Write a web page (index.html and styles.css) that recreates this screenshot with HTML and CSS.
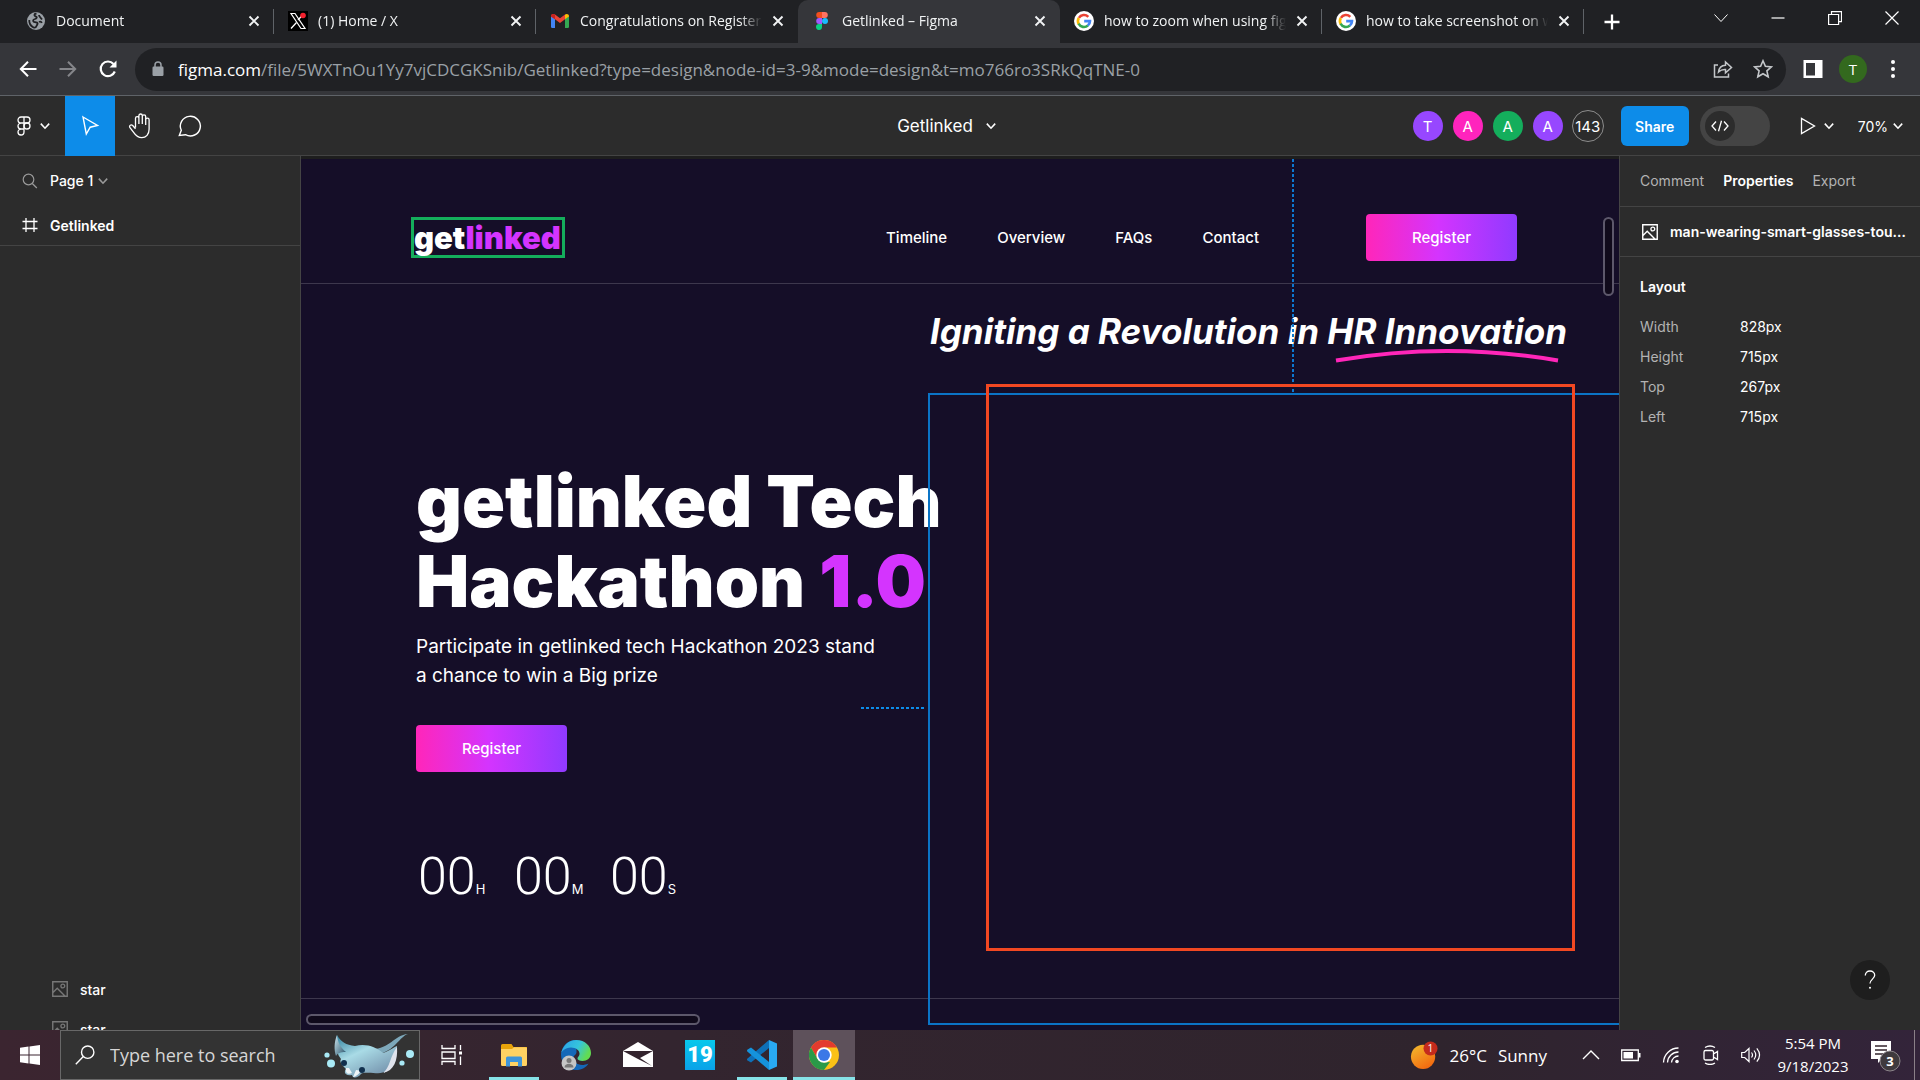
FILE: index.html
```html
<!DOCTYPE html>
<html lang="en">
<head>
<meta charset="utf-8">
<title>Getlinked – Figma</title>
<link rel="stylesheet" href="styles.css">
</head>
<body>
<svg class="defs" aria-hidden="true">
  <symbol id="close" viewBox="0 0 12 12"><path d="M1.5 1.5l9 9M10.5 1.5l-9 9" stroke="currentColor" stroke-width="1.9" fill="none"/></symbol>
  <symbol id="chev" viewBox="0 0 10 10"><path d="M1.500 3l3.500 3.800L8.500 3" stroke="currentColor" stroke-width="1.300" fill="none"/></symbol>
  <symbol id="google" viewBox="0 0 20 20"><circle cx="10" cy="10" r="10" fill="#fff"/><path d="M4.900 6.900A6 6 0 0 1 14.300 5.800" stroke="#ea4335" stroke-width="2.600" fill="none"/><path d="M4.700 13A6 6 0 0 1 4.800 7" stroke="#fbbc05" stroke-width="2.600" fill="none"/><path d="M13.900 14.500A6 6 0 0 1 4.600 12.700" stroke="#34a853" stroke-width="2.600" fill="none"/><path d="M10.200 10.100h5.800a6 6 0 0 1-2.200 4.500" stroke="#4285f4" stroke-width="2.600" fill="none"/></symbol>
  <symbol id="image" viewBox="0 0 16 16"><path d="M.75.75h14.500v14.500H.75zM1 11.500l4.200-4.200 8 8" stroke="currentColor" stroke-width="1.400" fill="none"/><circle cx="10.800" cy="5" r="1.900" stroke="currentColor" stroke-width="1.300" fill="none"/></symbol>
</svg>

<header class="browser">
  <div class="tabstrip">
    <div class="tab">
      <svg class="fav" viewBox="0 0 20 20"><circle cx="10" cy="10" r="9" fill="#9aa0a6"/><path d="M10.500 2.500c-3 .5-2.500 2.500-.5 3 1.500.5.500 2-1 2.500-2 .5-2.500 2-1 3l3 .5c1.500 1 0 2.500-.5 3.500-.5 1.500-1.500 2-3 1.500C5 15 3 12 3.300 9M13 4c0 2 2 2.500 3 4.500M13 11c1.500-1 2.500 0 2.700 1" stroke="#202124" stroke-width="1.800" fill="none"/></svg>
      <span class="tab-title">Document</span>
      <button class="tab-close" aria-label="Close tab"><svg><use href="#close"/></svg></button>
    </div>
    <div class="tab">
      <svg class="fav" viewBox="0 0 20 20"><path d="M0 0h20v20H0z"/><path d="M3 2.500h4L17 17.500h-4z" stroke="#fff" stroke-width="1.200" fill="none"/><path d="M16 2.500l-6 6.500M8.500 11.500L3 17.500" stroke="#fff" stroke-width="1.300"/><circle cx="15" cy="4.500" r="2.800" fill="#f4212e"/></svg>
      <span class="tab-title">(1) Home / X</span>
      <button class="tab-close" aria-label="Close tab"><svg><use href="#close"/></svg></button>
    </div>
    <div class="tab before-active">
      <svg class="fav" viewBox="0 0 20 20"><path d="M1 5l4 3v9H2.200A1.200 1.200 0 0 1 1 15.800z" fill="#4285f4"/><path d="M19 5l-4 3v9h2.800a1.200 1.200 0 0 0 1.200-1.200z" fill="#34a853"/><path d="M1 5.200C1 3 3.300 2.300 5 3.500L10 7.300l5-3.800V8.200L10 12 5 8.200 1 5.400z" fill="#ea4335"/><path d="M1 5.200C1 3 3.400 2.300 5 3.500v4.700L1 5.600z" fill="#c5221f"/><path d="M15 3.500c1.700-1.200 4-.5 4 1.700v.4l-4 2.600z" fill="#fbbc04"/></svg>
      <span class="tab-title">Congratulations on Registering</span>
      <button class="tab-close" aria-label="Close tab"><svg><use href="#close"/></svg></button>
    </div>
    <div class="tab active">
      <svg class="fav" viewBox="0 0 20 20"><path d="M10 1H7.200a3 3 0 0 0 0 6H10z" fill="#f24e1e"/><path d="M10 1h2.800a3 3 0 0 1 0 6H10z" fill="#ff7262"/><path d="M10 7H7.200a3 3 0 0 0 0 6H10z" fill="#a259ff"/><circle cx="13" cy="10" r="3" fill="#1abcfe"/><path d="M10 13H7.200a3 3 0 1 0 2.800 3z" fill="#0acf83"/></svg>
      <span class="tab-title">Getlinked – Figma</span>
      <button class="tab-close" aria-label="Close tab"><svg><use href="#close"/></svg></button>
    </div>
    <div class="tab">
      <svg class="fav"><use href="#google"/></svg>
      <span class="tab-title">how to zoom when using figma</span>
      <button class="tab-close" aria-label="Close tab"><svg><use href="#close"/></svg></button>
    </div>
    <div class="tab">
      <svg class="fav"><use href="#google"/></svg>
      <span class="tab-title">how to take screenshot on windows</span>
      <button class="tab-close" aria-label="Close tab"><svg><use href="#close"/></svg></button>
    </div>
    <button class="new-tab" aria-label="New tab"><svg viewBox="0 0 16 16"><path d="M8 .5v15M.5 8h15" stroke="currentColor" stroke-width="2.300"/></svg></button>
    <div class="window-controls">
      <button aria-label="Search tabs"><svg viewBox="0 0 14 14"><path d="M.5 3.500L7 10.500l6.500-7" stroke="currentColor" fill="none"/></svg></button>
      <button aria-label="Minimize"><svg viewBox="0 0 14 14"><path d="M.5 7h13" stroke="currentColor" stroke-width="1.200"/></svg></button>
      <button aria-label="Restore"><svg viewBox="0 0 14 14"><path d="M.6 3.500h10v10h-10zM3.500 3.500V.6h10v10h-2.900" stroke="currentColor" stroke-width="1.200" fill="none"/></svg></button>
      <button aria-label="Close window"><svg viewBox="0 0 14 14"><path d="M.5.5l13 13M13.500.5l-13 13" stroke="currentColor" stroke-width="1.200"/></svg></button>
    </div>
  </div>
  <div class="addressbar">
    <div class="nav-buttons">
      <button aria-label="Back"><svg viewBox="0 0 20 20"><path d="M18.500 10H3M10 2.800L2.800 10l7.200 7.200" stroke="currentColor" stroke-width="2" fill="none"/></svg></button>
      <button aria-label="Forward" class="dim"><svg viewBox="0 0 20 20"><path d="M1.500 10H17M10 2.800l7.200 7.200-7.200 7.200" stroke="currentColor" stroke-width="2" fill="none"/></svg></button>
      <button aria-label="Reload"><svg viewBox="0 0 20 20"><path d="M16.800 12.500A7.300 7.300 0 1 1 15.500 5" stroke="currentColor" stroke-width="2.200" fill="none"/><path d="M18.500 1.500v7h-7z" fill="currentColor"/></svg></button>
    </div>
    <div class="omnibox">
      <svg class="lock" viewBox="0 0 12 16"><rect x=".5" y="5.500" width="11" height="9.500" rx="1.200" fill="#9aa0a6"/><path d="M3 6V4a3 3 0 0 1 6 0v2" stroke="#9aa0a6" stroke-width="1.500" fill="none"/></svg>
      <a class="url" href="#"><span class="domain">figma.com</span>/file/5WXTnOu1Yy7vjCDCGKSnib/Getlinked?type=design&amp;node-id=3-9&amp;mode=design&amp;t=mo766ro3SRkQqTNE-0</a>
      <button aria-label="Share page"><svg viewBox="0 0 20 20"><path d="M5 6H1.500v12h14v-3.500M5.500 13c.5-4.500 3.500-6.500 7-6.700V3l6 5.500-6 5.300v-3.300c-3-.2-5 .5-7 2.500z" stroke="currentColor" stroke-width="1.500" fill="none"/></svg></button>
      <button aria-label="Bookmark"><svg viewBox="0 0 20 20"><path d="M10 1.800l2.400 5.500 6 .6-4.500 4 1.300 5.900L10 14.700l-5.200 3.100 1.300-5.900-4.500-4 6-.6z" stroke="currentColor" stroke-width="1.600" fill="none"/></svg></button>
    </div>
    <div class="profile-tools">
      <button aria-label="Side panel"><svg viewBox="0 0 20 20"><path d="M.5 1h19v18H.5zm2.500 3v12.500h9V4z" fill="currentColor" fill-rule="evenodd"/></svg></button>
      <button class="profile" aria-label="Profile">T</button>
      <button aria-label="Menu"><svg viewBox="0 0 20 20"><circle cx="10" cy="3" r="2"/><circle cx="10" cy="10" r="2"/><circle cx="10" cy="17" r="2"/></svg></button>
    </div>
  </div>
</header>

<div class="toolbar">
  <div class="tools">
    <button class="tool menu" aria-label="Main menu">
      <svg class="i-menu" viewBox="0 0 14 20"><path d="M7 1H4a3 3 0 0 0 0 6h3zM7 1h3a3 3 0 0 1 0 6H7zM7 7H4a3 3 0 0 0 0 6h3zM7 13H4a3 3 0 1 0 3 3z" stroke="currentColor" stroke-width="1.300" fill="none"/><circle cx="10" cy="10" r="3" stroke="currentColor" stroke-width="1.300" fill="none"/></svg>
      <svg class="chev"><use href="#chev"/></svg>
    </button>
    <button class="tool selected" aria-label="Move"><svg viewBox="0 0 24 24"><path d="M5 3l14.500 8.500-7.300 1.700L8.300 20z" stroke="currentColor" stroke-width="1.400" fill="none"/></svg></button>
    <button class="tool" aria-label="Hand tool"><svg class="i-hand" viewBox="0 0 24 26"><path d="M7.500 14.500V5.300a1.700 1.700 0 0 1 3.400 0V11M10.900 11V2.700a1.700 1.700 0 0 1 3.400 0V11M14.300 11V3.600a1.700 1.700 0 0 1 3.400 0V12M17.700 12V6.800a1.700 1.700 0 0 1 3.400 0v9.500c0 5-3 8.400-7.300 8.400-4 0-6-2-8-5L1.800 14.500c-1-2 1.300-3.500 2.900-2l2.800 3.200" stroke="currentColor" stroke-width="1.300" fill="none"/></svg></button>
    <button class="tool" aria-label="Comment tool"><svg viewBox="0 0 24 24"><path d="M1.300 21.500l2-5.200A10 9.800 0 1 1 7.500 20.700z" stroke="currentColor" stroke-width="1.400" fill="none"/></svg></button>
  </div>
  <button class="file-name">Getlinked <svg class="chev"><use href="#chev"/></svg></button>
  <div class="actions">
    <div class="avatars">
      <span class="avatar violet">T</span><span class="avatar pink">A</span><span class="avatar green">A</span><span class="avatar violet">A</span><span class="avatar count">143</span>
    </div>
    <button class="share">Share</button>
    <button class="dev-toggle" aria-label="Dev mode"><span class="knob"><svg viewBox="0 0 18 12"><path d="M5 1.500L1 6l4 4.500M13 1.500L17 6l-4 4.500M10.500.8l-3 10.400" stroke="currentColor" stroke-width="1.300" fill="none"/></svg></span></button>
    <button class="present" aria-label="Present"><svg class="play" viewBox="0 0 16 18"><path d="M1.500 1.500v15L14.500 9z" stroke="currentColor" stroke-width="1.300" fill="none"/></svg><svg class="chev"><use href="#chev"/></svg></button>
    <button class="zoom-level">70% <svg class="chev"><use href="#chev"/></svg></button>
  </div>
</div>

<div class="workspace">
  <aside class="layers">
    <button class="page-row"><svg viewBox="0 0 16 16"><circle cx="6.500" cy="6.500" r="5.300" stroke="currentColor" stroke-width="1.200" fill="none"/><path d="M10.300 10.500l4.500 4.500" stroke="currentColor" stroke-width="1.200"/></svg><span>Page 1</span><svg class="chev"><use href="#chev"/></svg></button>
    <div class="frame-row"><svg viewBox="0 0 16 16"><path d="M4 1v14M12 1v14M.5 4.500h15M.5 11.500h15" stroke="currentColor" stroke-width="1.300"/></svg><span>Getlinked</span></div>
    <ul class="layer-list">
      <li><svg><use href="#image"/></svg>star</li>
      <li><svg><use href="#image"/></svg>star</li>
    </ul>
  </aside>

  <main class="canvas">
    <div class="site">
      <div class="site-header">
        <a class="logo" href="#">get<span class="accent">linked</span></a>
        <nav class="site-nav"><a href="#">Timeline</a><a href="#">Overview</a><a href="#">FAQs</a><a href="#">Contact</a></nav>
        <button class="register">Register</button>
      </div>
      <section class="hero">
        <p class="slogan">Igniting a Revolution in <span class="marked">HR Innovation<svg class="swoosh" viewBox="0 0 226 16" preserveAspectRatio="none"><path d="M1 12.500Q113-6.500 225 12.500" stroke="#ff26b9" stroke-width="4" fill="none"/></svg></span></p>
        <h1>getlinked Tech<br>Hackathon <span class="accent">1.0</span></h1>
        <p class="lead">Participate in getlinked tech Hackathon 2023 stand<br>a chance to win a Big prize</p>
        <button class="register">Register</button>
        <div class="countdown">
          <div class="unit">00<small>H</small></div>
          <div class="unit">00<small>M</small></div>
          <div class="unit">00<small>S</small></div>
        </div>
      </section>
    </div>
    <div class="guide-v"></div>
    <div class="guide-h"></div>
    <div class="hover-outline"></div>
    <div class="viewer-outline"></div>
    <div class="scroll-v"></div>
    <div class="scroll-h"></div>
  </main>

  <aside class="inspector">
    <div class="inspector-tabs"><button>Comment</button><button class="current">Properties</button><button>Export</button></div>
    <div class="selection"><svg><use href="#image"/></svg><span>man-wearing-smart-glasses-touching-screen</span></div>
    <h2>Layout</h2>
    <dl>
      <dt>Width</dt><dd>828px</dd>
      <dt>Height</dt><dd>715px</dd>
      <dt>Top</dt><dd>267px</dd>
      <dt>Left</dt><dd>715px</dd>
    </dl>
    <button class="help" aria-label="Help"><svg viewBox="0 0 12 20"><path d="M1.300 5.500C1.300 2.600 3.300 1 6 1s4.700 1.700 4.700 4.200c0 3.600-4.700 4.300-4.700 8.300" stroke="currentColor" stroke-width="1.300" fill="none"/><circle cx="6" cy="17.800" r="1" fill="currentColor"/></svg></button>
  </aside>
</div>

<footer class="taskbar">
  <button class="start" aria-label="Start"><svg viewBox="0 0 20 20"><path d="M0 2.800L8.500 1.600v8H0zM9.500 1.500L20 0v9.600H9.500zM0 10.500h8.500v8L0 17.300zM9.500 10.500H20V20l-10.500-1.500z" fill="#fff"/></svg></button>
  <div class="search">
    <svg class="lens" viewBox="0 0 20 20"><circle cx="12.700" cy="7.200" r="6.200" stroke="#fff" stroke-width="1.400" fill="none"/><path d="M8.300 11.600L.8 19.200" stroke="#fff" stroke-width="1.400"/></svg>
    <input type="text" placeholder="Type here to search" aria-label="Type here to search">
    <svg class="ray" viewBox="0 0 90 46">
      <defs><linearGradient id="rayg" x1="0" y1="0" x2=".7" y2="1"><stop offset="0" stop-color="#2d7f9c"/><stop offset=".45" stop-color="#a9dbe6"/><stop offset="1" stop-color="#7593ad"/></linearGradient><linearGradient id="wing" x1="0" y1="0" x2="1" y2="1"><stop offset="0" stop-color="#cfe7ee"/><stop offset="1" stop-color="#245069"/></linearGradient></defs>
      <path d="M48 17C66 17 70 3 84 2c-8 2-14 18-30 20z" fill="#7da8ba"/>
      <path d="M13 3c4 7 9 10 18 11 11-3 21 1 28 7 6-2 11-6 14-7 0 9-2 21-12 26-10 3-20-1-24 2-3 4-8 5-9 1-6 1-9-2-6-6-4-4-7-7-5-10-5-6-6-15-4-24z" fill="url(#rayg)"/>
      <path d="M13 3c1 8 3 12 9 17-6 0-8 1-10 4-2-6-2-14 1-21z" fill="url(#wing)"/>
      <path d="M73 15c1 13-3 24-14 26 7-5 7-17 14-26z" fill="#dfe3ec"/>
      <path d="M22 36c-1 5 2 7 6 5l-3-5zM29 45c4 0 6-5 10-6l-7-1z" fill="#eef4f7"/>
      <circle cx="20" cy="31" r="3" fill="#12304d"/><circle cx="38" cy="38" r="3" fill="#12304d"/>
      <g fill="#a9eaf6"><circle cx="3" cy="23" r="2.600"/><circle cx="7" cy="31.500" r="4"/><circle cx="86" cy="22" r="4"/><circle cx="78" cy="31" r="2.600"/></g>
    </svg>
  </div>
  <div class="apps">
    <button aria-label="Task view"><svg class="i-small" viewBox="0 0 22 22"><path d="M1 1v3.500h13V1M1 21v-3.500h13V21M1 8h13v6.500H1zM19.500 1v5M19.500 12.500v8.500" stroke="#fff" stroke-width="1.300" fill="none"/><path d="M18 7.500h3v3h-3z" fill="#fff"/></svg></button>
    <button class="running" aria-label="File Explorer"><svg viewBox="0 0 30 30"><path d="M2 5.500A1.500 1.500 0 0 1 3.500 4h9l2 3H28v6H2z" fill="#e8a30a"/><path d="M2 9h11l2-1.700h11.500A1.500 1.500 0 0 1 28 9v15.500a1.500 1.500 0 0 1-1.500 1.500h-23A1.500 1.500 0 0 1 2 24.500z" fill="#ffd262"/><path d="M7 26.500V18a1.500 1.500 0 0 1 1.500-1.500h13A1.500 1.500 0 0 1 23 18v8.500h-4V22h-8v4.500z" fill="#3e95d9"/></svg></button>
    <button aria-label="Edge"><svg class="i-large" viewBox="0 0 32 32"><defs><linearGradient id="edg" x1="0" y1="0" x2="1" y2=".4"><stop offset="0" stop-color="#2b9fe8"/><stop offset=".6" stop-color="#35c5dc"/><stop offset="1" stop-color="#62dc52"/></linearGradient></defs><path d="M16 1C8 1 1.500 7 1 15.500 1 25 8 31 16 31c6 0 10-2.500 12.500-6.500-9 4-15-1-15-5.500 0-3 3-3 3-6z" fill="#1468b8"/><path d="M1 15.500C2 7 8.500 1 16.500 1 25 1 31 7 31 14c0 5-4 8-8.500 8-3 0-5-1-5-2.500s2-2 2-5-3.500-6-8.500-6c-6 0-10 4-10 7z" fill="url(#edg)"/><circle cx="9" cy="24" r="7.500" fill="#c5c5c5"/><circle cx="9" cy="21.500" r="2.500" fill="#777"/><path d="M4.500 28.500c0-5 9-5 9 0" fill="#777"/></svg></button>
    <button aria-label="Mail"><svg viewBox="0 0 30 30"><path d="M0 11L15 2l15 9v16H0z" fill="#fff"/><path d="M0 11h30L17 18l12 8-14-7z" fill="#33232d"/></svg></button>
    <button aria-label="Calendar app"><span class="nineteen">19</span></button>
    <button class="running" aria-label="Visual Studio Code"><svg viewBox="0 0 30 30"><path d="M22 0l8 3.500v23L22 30z" fill="#29a9f2"/><path d="M22 0v8L4 22.500l-3.500-2c-.7-.6-.7-1.500 0-2z" fill="#0e70b8"/><path d="M22 30v-8L4 7.500.6 9.600c-.8.700-.8 1.500 0 2.200z" fill="#1593dc"/></svg></button>
    <button class="running focused" aria-label="Chrome"><svg viewBox="0 0 30 30"><circle cx="15" cy="15" r="15" fill="#fbc116"/><path d="M2 7.500A15 15 0 0 1 28 7.500H15L8.500 18.800z" fill="#e33b2e"/><path d="M2 7.500l6.500 11.300L15 22.500l6-.5-6 8A15 15 0 0 1 2 7.500z" fill="#2a9a48"/><circle cx="15" cy="15" r="7.700" fill="#fff"/><circle cx="15" cy="15" r="6" fill="#3b78e7"/></svg></button>
  </div>
  <div class="tray">
    <button class="weather"><svg viewBox="0 0 30 30"><defs><linearGradient id="sun" x1="0" y1="0" x2=".6" y2="1"><stop offset="0" stop-color="#f3bd2f"/><stop offset="1" stop-color="#f26a10"/></linearGradient></defs><circle cx="14" cy="17" r="13" fill="url(#sun)"/><circle cx="22" cy="8" r="7.500" fill="#c42b1c"/><text x="22" y="12" text-anchor="middle" font-size="11" fill="#fff">1</text></svg><span>26°C</span><span>Sunny</span></button>
    <div class="status">
      <button aria-label="Hidden icons"><svg viewBox="0 0 20 20"><path d="M2 14l8-8 8 8" stroke="#fff" stroke-width="1.400" fill="none"/></svg></button>
      <button aria-label="Battery"><svg viewBox="0 0 20 20"><path d="M.7 5h16.600v10.500H.7z" stroke="#fff" stroke-width="1.300" fill="none"/><path d="M2.500 7h9.500v6.500H2.500zM17.500 8h2v4.500h-2z" fill="#fff"/></svg></button>
      <button aria-label="Network"><svg viewBox="0 0 20 20"><path d="M2.500 17.500A15 15 0 0 1 17.500 3M6.500 17.500A11 11 0 0 1 17.500 7M10.500 17.500A7 7 0 0 1 17.500 11" stroke="#fff" stroke-width="1.300" fill="none"/><circle cx="16" cy="16.500" r="1.800" fill="#fff"/></svg></button>
      <button aria-label="Meet now"><svg viewBox="0 0 20 20"><path d="M3 7a1.500 1.500 0 0 1 1.500-1.500H11A1.500 1.500 0 0 1 12.500 7v6.500A1.500 1.500 0 0 1 11 15H4.500A1.500 1.500 0 0 1 3 13.500zM12.500 9l4-2.500v8l-4-2.500M4 2.500q5-3 10 0M4 18q5 3 10 0" stroke="#fff" stroke-width="1.300" fill="none"/></svg></button>
      <button aria-label="Volume"><svg viewBox="0 0 20 20"><path d="M.7 7.500h3L8 3.500v13L3.700 12.500h-3zM10.500 7.500q2 2.500 0 5M13 5.500q3.500 4.500 0 9M15.800 3.300q5.500 6.700 0 13.400" stroke="#fff" stroke-width="1.200" fill="none"/></svg></button>
    </div>
    <button class="clock"><span>5:54 PM</span><span>9/18/2023</span></button>
    <button class="notices" aria-label="Notifications"><svg viewBox="0 0 32 34"><path d="M2 3h20v18h-9l-4 4v-4H2z" fill="#fff"/><path d="M6 8h12M6 12h12M6 16h8" stroke="#33242d" stroke-width="1.400"/><circle cx="21" cy="23" r="10" fill="#3f3a3e" stroke="#8c858a"/><text x="21" y="28" text-anchor="middle" font-size="13" font-weight="700" fill="#fff">3</text></svg></button>
  </div>
</footer>
</body>
</html>
```
FILE: styles.css
```css
* { box-sizing: border-box; }

body {
  margin: 0;
  height: 100vh;
  display: flex;
  flex-direction: column;
  overflow: hidden;
  background: #2c2c2c;
  color: #fff;
  font-family: Inter, "Liberation Sans", sans-serif;
  font-size: 14px;
}

button {
  display: flex;
  align-items: center;
  justify-content: center;
  margin: 0;
  padding: 0;
  border: 0;
  background: none;
  color: inherit;
  font: inherit;
}

a { color: inherit; text-decoration: none; }
svg { display: block; flex: none; }
.defs { position: absolute; width: 0; height: 0; }
.chev { width: 12px; height: 12px; }

/* Browser */
.browser { flex: none; background: #35363a; border-bottom: 1px solid #5f6368; font-family: "Open Sans", sans-serif; }
.tabstrip { display: flex; height: 43px; padding-left: 12px; background: #202124; }
.tab {
  position: relative;
  display: flex;
  align-items: center;
  flex: 0 1 262px;
  min-width: 0;
  padding: 0 14px 2px;
  color: #f1f3f4;
}
.tab::after {
  content: "";
  position: absolute;
  right: 0;
  top: 9px;
  width: 1px;
  height: 25px;
  background: #5f6368;
}
.tab.active::after, .tab.before-active::after { display: none; }
.tab.active { background: #35363a; border-radius: 10px 10px 0 0; }
.fav { width: 20px; height: 20px; }
.tab-title {
  flex: 1;
  margin: 0 10px;
  overflow: hidden;
  white-space: nowrap;
  font-size: 14px;
  mask-image: linear-gradient(to right, #000 88%, transparent);
}
.tab-close svg { width: 12px; height: 12px; }
.new-tab { width: 56px; }
.new-tab svg { width: 16px; height: 16px; }
.window-controls { display: flex; margin-left: auto; padding-bottom: 7px; }
.window-controls button { width: 57px; }
.window-controls svg { width: 14px; height: 14px; }

.addressbar { display: flex; align-items: center; height: 52px; }
.nav-buttons { display: flex; gap: 20px; padding: 0 17px 0 18px; }
.nav-buttons svg, .omnibox button svg, .profile-tools svg { width: 20px; height: 20px; fill: currentColor; }
.dim { color: #85868a; }
.omnibox {
  display: flex;
  align-items: center;
  flex: 1;
  min-width: 0;
  height: 43px;
  padding: 0 13px 0 17px;
  border-radius: 22px;
  background: #202124;
  color: #c4c7ca;
}
.lock { width: 12px; height: 16px; }
.url { flex: 1; margin-left: 14px; overflow: hidden; white-space: nowrap; font-size: 17px; color: #9aa0a6; }
.domain { color: #fff; }
.omnibox button { margin-left: 20px; }
.profile-tools { display: flex; align-items: center; gap: 16px; padding: 0 17px; }
.profile { width: 28px; height: 28px; border-radius: 50%; background: #33691e; font-size: 15px; }

/* Editor toolbar */
.toolbar {
  display: grid;
  grid-template-columns: 1fr auto 1fr;
  flex: none;
  height: 60px;
  border-bottom: 1px solid #444;
}
.tools { display: flex; }
.tool { width: 50px; height: 60px; }
.tool svg { width: 24px; height: 24px; }
.tool.menu { width: 65px; gap: 8px; padding-left: 2px; }
.tool.menu .i-menu { width: 14px; height: 20px; }
.tool.menu .chev { width: 12px; height: 12px; }
.tool .i-hand { height: 26px; }
.selected { background: #0d8ce9; }
.file-name { gap: 12px; padding-right: 26px; font-size: 17px; }
.actions { display: flex; align-items: center; justify-content: flex-end; padding-right: 16px; }
.avatars { display: flex; align-items: center; gap: 10px; margin-right: 17px; }
.avatar {
  display: flex;
  align-items: center;
  justify-content: center;
  width: 30px;
  height: 30px;
  border-radius: 50%;
  font-size: 15px;
}
.violet { background: #9747ff; }
.pink { background: #ff24bd; }
.green { background: #14ae5c; }
.count { width: 32px; height: 32px; margin-left: -1px; border: 1px solid #8c8c8c; }
.share { width: 68px; height: 40px; border-radius: 6px; background: #0d8ce9; font-weight: 600; }
.dev-toggle { justify-content: flex-start; width: 70px; height: 40px; margin-left: 11px; padding-left: 5px; border-radius: 20px; background: #444; }
.knob { display: flex; align-items: center; justify-content: center; width: 30px; height: 30px; border-radius: 50%; background: #2c2c2c; }
.knob svg { width: 18px; height: 12px; }
.present { gap: 7px; margin-left: 30px; }
.play { width: 16px; height: 18px; }
.zoom-level { gap: 4px; margin-left: 23px; }

/* Workspace */
.workspace { display: flex; flex: 1; min-height: 0; }
.layers { display: flex; flex-direction: column; flex: none; width: 301px; overflow: hidden; border-right: 1px solid #444; }
.page-row, .frame-row { display: flex; align-items: center; justify-content: flex-start; flex: none; padding: 0 0 1px 22px; }
.page-row { height: 50px; font-weight: 500; }
.page-row svg, .frame-row svg { width: 16px; height: 16px; margin-right: 12px; }
.page-row svg { color: #9a9a9a; }
.page-row .chev { width: 12px; height: 12px; margin-left: 4px; }
.frame-row { height: 40px; border-bottom: 1px solid #444; font-weight: 600; }
.layer-list { flex: none; margin: auto 0 -20px; padding: 0; list-style: none; }
.layer-list li { display: flex; align-items: center; gap: 12px; height: 40px; padding: 0 0 2px 52px; font-weight: 500; }
.layer-list svg { width: 16px; height: 16px; color: #777; }

/* Canvas */
.canvas { position: relative; flex: 1; min-width: 0; overflow: hidden; padding-top: 3px; background: #1e1e1e; }
.site { min-height: 100%; background: #150e28; }
.site-header { display: flex; align-items: flex-start; height: 125px; padding: 34px 102px 0 110px; border-bottom: 1px solid #3d374d; }
.site-header > * { flex: none; }
.logo {
  margin-top: 24px;
  width: 154px;
  height: 41px;
  border: 3px solid #14ae5c;
  line-height: 35px;
  font-size: 31px;
  font-weight: 900;
}
.accent { color: #d434fe; }
.site-nav { display: flex; gap: 50px; margin: 36px 107px 0 auto; font-size: 15px; line-height: 18px; font-weight: 500; }
.register {
  width: 151px;
  height: 47px;
  border-radius: 4px;
  background: linear-gradient(90deg, #ff26b9, #d434fe 48%, #903aff);
  font-size: 15px;
  font-weight: 500;
}
.site-header .register { margin-top: 21px; }
.hero { height: 715px; padding: 27px 52px 0 115px; border-bottom: 1px solid #3d374d; }
.slogan { margin: 0; text-align: right; white-space: nowrap; font-size: 35px; line-height: 40px; font-weight: 700; font-style: italic; }
.marked { position: relative; }
.swoosh { position: absolute; left: 8px; bottom: -12px; width: 224px; height: 16px; }
h1 { margin: 110px 0 0; font-size: 71px; line-height: 80px; font-weight: 900; white-space: nowrap; }
.lead { margin: 11px 0 35px; font-size: 19px; line-height: 29px; white-space: nowrap; }
.countdown { display: flex; gap: 24px; margin-top: 74px; padding-left: 2px; font-family: Roboto, sans-serif; font-size: 52px; line-height: 62px; font-weight: 300; }
.unit { width: 72px; white-space: nowrap; }
.unit small { font-family: Inter, sans-serif; font-size: 13px; font-weight: 400; }

/* Overlays drawn above the artboard */
.guide-v { position: absolute; left: 991px; top: 3px; width: 2px; height: 234px; background: repeating-linear-gradient(#0d78d0 0 3px, transparent 3px 5px); }
.guide-h { position: absolute; left: 560px; top: 551px; width: 65px; height: 2px; background: repeating-linear-gradient(90deg, #0d8ce9 0 3px, transparent 3px 5px); }
.hover-outline { position: absolute; left: 627px; right: -10px; top: 237px; height: 632px; border: 2px solid #0b74c6; }
.viewer-outline { position: absolute; left: 685px; right: 44px; top: 228px; height: 567px; border: 3px solid #f24822; }
.scroll-v, .scroll-h { position: absolute; border: 2px solid #5d586b; border-radius: 6px; background: #100a1b; }
.scroll-v { right: 5px; top: 61px; width: 11px; height: 79px; }
.scroll-h { left: 5px; bottom: 5px; width: 394px; height: 11px; }

/* Inspector */
.inspector { position: relative; flex: none; width: 301px; border-left: 1px solid #444; }
.inspector-tabs { display: flex; gap: 19px; height: 51px; padding: 0 0 2px 20px; border-bottom: 1px solid #444; color: #b3b3b3; }
.current { color: #fff; font-weight: 600; }
.selection { display: flex; align-items: center; gap: 12px; height: 50px; padding: 0 8px 0 22px; border-bottom: 1px solid #444; font-weight: 600; }
.selection svg { width: 16px; height: 16px; }
.selection span { overflow: hidden; white-space: nowrap; text-overflow: ellipsis; }
.inspector h2 { margin: 20px 0 15px; padding-left: 20px; font-size: 14px; line-height: 20px; font-weight: 600; }
dl { display: grid; grid-template-columns: 100px 1fr; margin: 0; padding-left: 20px; line-height: 30px; }
dt { color: #b3b3b3; }
dd { margin: 0; }
.help { position: absolute; right: 30px; bottom: 30px; width: 40px; height: 40px; border-radius: 50%; background: #1e1e1e; }
.help svg { width: 12px; height: 20px; }

/* Taskbar */
.taskbar {
  display: flex;
  flex: none;
  height: 50px;
  background: linear-gradient(90deg, #3b2530, #33252f 35%, #2f242d 75%, #33243a);
  font-family: "Open Sans", sans-serif;
}
.start { width: 60px; }
.start svg { width: 20px; height: 20px; }
.search { display: flex; align-items: center; width: 360px; padding: 0 5px 0 14px; border: 1px solid #686868; background: #333; }
.lens { width: 20px; height: 20px; }
.search input { flex: 1; min-width: 0; margin-left: 15px; padding: 0; border: 0; background: none; color: #fff; font: 18px "Open Sans", sans-serif; }
.search input::placeholder { color: #d6d6d6; opacity: 1; }
.ray { width: 90px; height: 46px; }
.apps { display: flex; padding-left: 1px; }
.apps button { position: relative; width: 62px; }
.apps svg { width: 30px; height: 30px; }
.apps .i-small { width: 22px; height: 22px; }
.apps .i-large { width: 32px; height: 32px; }
.running::after { content: ""; position: absolute; left: 6px; right: 6px; bottom: 0; height: 3px; background: #86e3e8; }
.focused { background: #5e515b; }
.focused::after { left: 0; right: 0; }
.nineteen { width: 30px; height: 30px; background: linear-gradient(#08c8ec, #0aa2e8); font: 900 22px/30px Roboto, sans-serif; }
.tray { display: flex; margin-left: auto; border-right: 1px solid #8a8088; margin-right: 5px; }
.weather { gap: 11px; margin-right: 24px; font-size: 17px; }
.weather svg { width: 28px; height: 28px; }
.status { display: flex; }
.status button { width: 40px; }
.status svg { width: 20px; height: 20px; }
.clock { flex-direction: column; width: 84px; font-size: 15px; line-height: 23px; }
.notices { width: 59px; }
.notices svg { width: 32px; height: 34px; }
```
